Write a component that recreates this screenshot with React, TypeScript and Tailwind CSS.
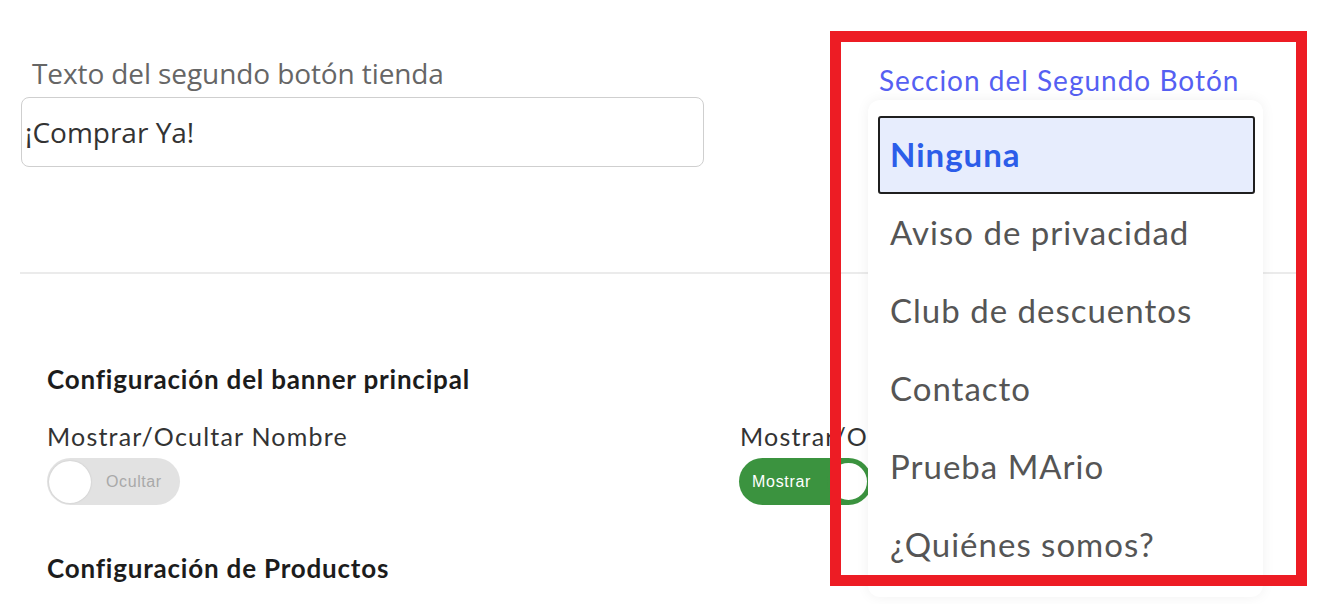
import React from "react";

const opciones = [
  "Ninguna",
  "Aviso de privacidad",
  "Club de descuentos",
  "Contacto",
  "Prueba MArio",
  "¿Quiénes somos?",
];

function Toggle({ on, label }: { on: boolean; label: string }) {
  if (on) {
    return (
      <div className="flex items-center w-[133px] h-[47px] rounded-full bg-[#3b933f] pl-[13px] pr-[2px]">
        <span className="flex-1 text-[16px] tracking-[0.7px] text-white font-['Liberation_Sans',sans-serif]">{label}</span>
        <div className="w-[43px] h-[43px] rounded-full bg-white border-[3px] border-[#3b933f]" />
      </div>
    );
  }
  return (
    <div className="flex items-center w-[133px] h-[47px] rounded-full bg-[#e2e2e2] pl-[2px]">
      <div className="w-[42px] h-[42px] rounded-full bg-white shadow-[0_0_2px_rgba(0,0,0,0.15)]" />
      <span className="ml-[15px] text-[16px] tracking-[0.6px] text-[#a9a9a9] font-['Liberation_Sans',sans-serif]">{label}</span>
    </div>
  );
}

export default function App() {
  return (
    <div className="relative w-[1323px] h-[604px] overflow-hidden bg-white font-['Lato',sans-serif]">
      {/* top row */}
      <div className="flex pt-[56px]">
        <div className="ml-[21px] w-[683px]">
          <div className="pl-[11px] text-[28px] leading-[34px] text-[#666] font-['Open_Sans',sans-serif] tracking-[-0.1px]">
            Texto del segundo botón tienda
          </div>
          <div className="mt-[7px] h-[70px] rounded-[8px] border border-[#cfcfcf] flex items-center pl-[3px] text-[28px] text-[#333] font-['Open_Sans',sans-serif]">
            ¡Comprar Ya!
          </div>
        </div>
        <div className="ml-[175px] mt-[6px] text-[28px] leading-[36px] tracking-[1px] text-[#5560f2]">
          Seccion del Segundo Botón
        </div>
      </div>

      <div className="mx-[20px] mt-[105px] border-t-2 border-[#ebebeb]" />

      {/* banner config */}
      <div className="pl-[47px] pt-[90px]">
        <div className="text-[26px] leading-[30px] tracking-[0.8px] font-bold text-[#1c1c1c]">
          Configuración del banner principal
        </div>
        <div className="grid grid-cols-[693px_1fr] mt-[29px]">
          <div>
            <div className="text-[25px] leading-[26px] tracking-[1.2px] text-[#333]">Mostrar/Ocultar Nombre</div>
            <div className="mt-[9px]">
              <Toggle on={false} label="Ocultar" />
            </div>
          </div>
          <div>
            <div className="text-[25px] leading-[26px] tracking-[1.2px] text-[#333] whitespace-nowrap">Mostrar/Ocultar Imagen</div>
            <div className="mt-[9px] -ml-[1px]">
              <Toggle on={true} label="Mostrar" />
            </div>
          </div>
        </div>
        <div className="mt-[48px] text-[26px] leading-[30px] tracking-[0.8px] font-bold text-[#1c1c1c]">
          Configuración de Productos
        </div>
      </div>

      {/* dropdown menu */}
      <div className="absolute left-[868px] top-[100px] w-[395px] h-[497px] rounded-[12px] bg-white shadow-[0_0_14px_rgba(0,0,0,0.06)] pl-[10px] pt-[16px]">
        {opciones.map((op, i) => (
          <div
            key={op}
            className={
              i === 0
                ? "h-[78px] w-[377px] flex items-center px-[10px] rounded-[3px] border-2 border-[#1f1f1f] bg-[#e7edfd] text-[33px] tracking-[1px] font-bold text-[#2c5de9]"
                : "h-[78px] w-[377px] flex items-center px-[12px] text-[33px] tracking-[1px] text-[#555]"
            }
          >
            {op}
          </div>
        ))}
      </div>

      {/* red highlight */}
      <div className="absolute left-[830px] top-[31px] w-[477px] h-[555px] border-[11px] border-[#ed1c24] pointer-events-none" />
    </div>
  );
}
